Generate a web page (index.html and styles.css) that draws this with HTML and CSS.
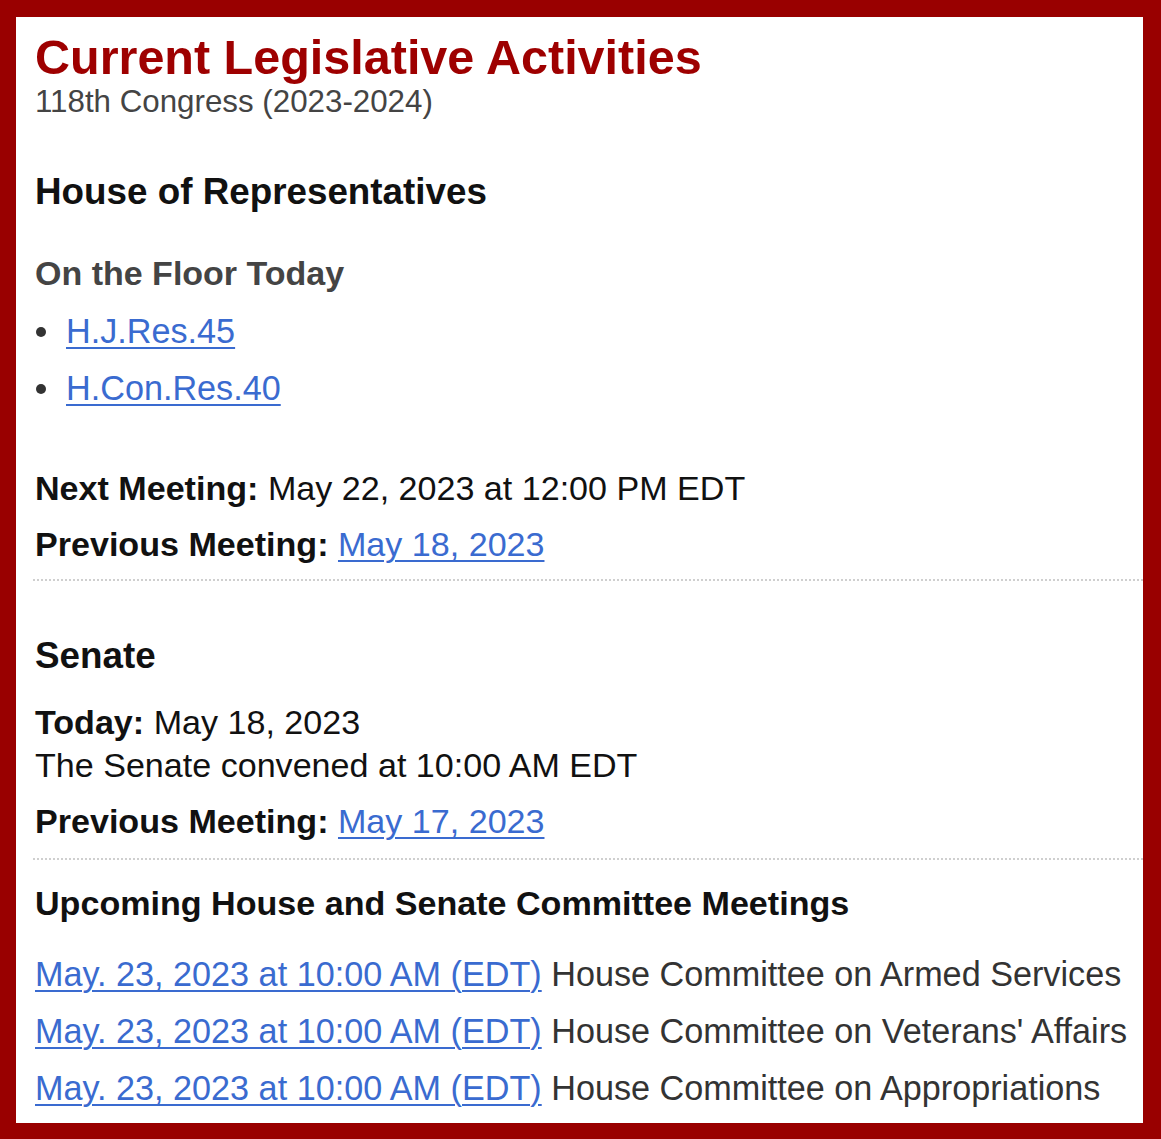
FILE: index.html
```html
<!DOCTYPE html>
<html>
<head>
<meta charset="utf-8">
<link rel="stylesheet" href="styles.css">
</head>
<body>
<div class="page">
  <div class="content">
    <h1 class="title">Current Legislative Activities</h1>
    <div class="subtitle">118th Congress (2023-2024)</div>

    <section class="house">
      <h2 class="chamber">House of Representatives</h2>
      <h3 class="floor">On the Floor Today</h3>
      <ul class="bills">
        <li><a href="#">H.J.Res.45</a></li>
        <li><a href="#">H.Con.Res.40</a></li>
      </ul>
      <p class="line next"><b>Next Meeting:</b> May 22, 2023 at 12:00 PM EDT</p>
      <p class="line"><b>Previous Meeting:</b> <a href="#">May 18, 2023</a></p>
    </section>
  </div>
  <hr class="sep">
  <div class="content">
    <section class="senate">
      <h2 class="chamber senate-title">Senate</h2>
      <p class="line today"><b>Today:</b> May 18, 2023<br>The Senate convened at 10:00 AM EDT</p>
      <p class="line senate-prev"><b>Previous Meeting:</b> <a href="#">May 17, 2023</a></p>
    </section>
  </div>
  <hr class="sep">
  <div class="content">
    <h2 class="upcoming">Upcoming House and Senate Committee Meetings</h2>
    <ul class="meetings">
      <li><a href="#">May. 23, 2023 at 10:00 AM (EDT)</a> House Committee on Armed Services</li>
      <li><a href="#">May. 23, 2023 at 10:00 AM (EDT)</a> House Committee on Veterans' Affairs</li>
      <li><a href="#">May. 23, 2023 at 10:00 AM (EDT)</a> House Committee on Appropriations</li>
    </ul>
  </div>
</div>
</body>
</html>
```

FILE: styles.css
```css
html, body {
  margin: 0;
  padding: 0;
}
body {
  background: #990000;
  font-family: "Liberation Sans", Arial, sans-serif;
  color: #111;
}
.page {
  background: #fff;
  margin: 17px 18px 0 16px;
  height: 1106px;
  overflow: hidden;
  padding-top: 1px;
  box-sizing: border-box;
}
.content {
  padding-left: 19px;
}
.title {
  margin: 12px 0 0 0;
  font-size: 48.5px;
  line-height: 54px;
  color: #9e0000;
  font-weight: bold;
}
.subtitle {
  font-size: 31.3px;
  line-height: 34px;
  color: #444;
  margin-top: 1px;
}
.chamber {
  font-size: 36.8px;
  line-height: 40px;
  font-weight: bold;
  margin: 53px 0 0 0;
  color: #111;
}
.floor {
  font-size: 34px;
  line-height: 40px;
  color: #444;
  margin: 41px 0 0 0;
}
.bills {
  list-style: none;
  margin: 18px 0 0 0;
  padding: 0;
}
.bills li {
  font-size: 34.2px;
  line-height: 40px;
  margin-bottom: 17px;
  position: relative;
  padding-left: 31px;
}
.bills li::before {
  content: "";
  position: absolute;
  left: 1px;
  top: 16px;
  width: 10px;
  height: 10px;
  border-radius: 50%;
  background: #333;
}
a {
  color: #3a6bd0;
  text-decoration: underline;
  text-decoration-thickness: 2px;
  text-underline-offset: 4px;
}
.line {
  font-size: 34.1px;
  line-height: 42px;
  margin: 0 0 14px 0;
}
.line b {
  font-weight: bold;
}
.next {
  margin-top: 59px;
}
.sep {
  border: 0;
  border-top: 2px dotted #cfcfcf;
  margin: 0 0 0 17px;
  height: 0;
}
.senate-title {
  margin-top: 55px;
}
.today {
  margin-top: 25px;
  line-height: 43px;
  margin-bottom: 13px;
}
.senate-prev {
  margin-bottom: 16px;
}
.upcoming {
  font-size: 34.1px;
  line-height: 40px;
  font-weight: bold;
  color: #111;
  margin: 23px 0 0 0;
}
.meetings {
  list-style: none;
  padding: 0;
  margin: 23px 0 0 0;
}
.meetings li {
  font-size: 34.2px;
  line-height: 57px;
  color: #333;
  white-space: nowrap;
}
```
